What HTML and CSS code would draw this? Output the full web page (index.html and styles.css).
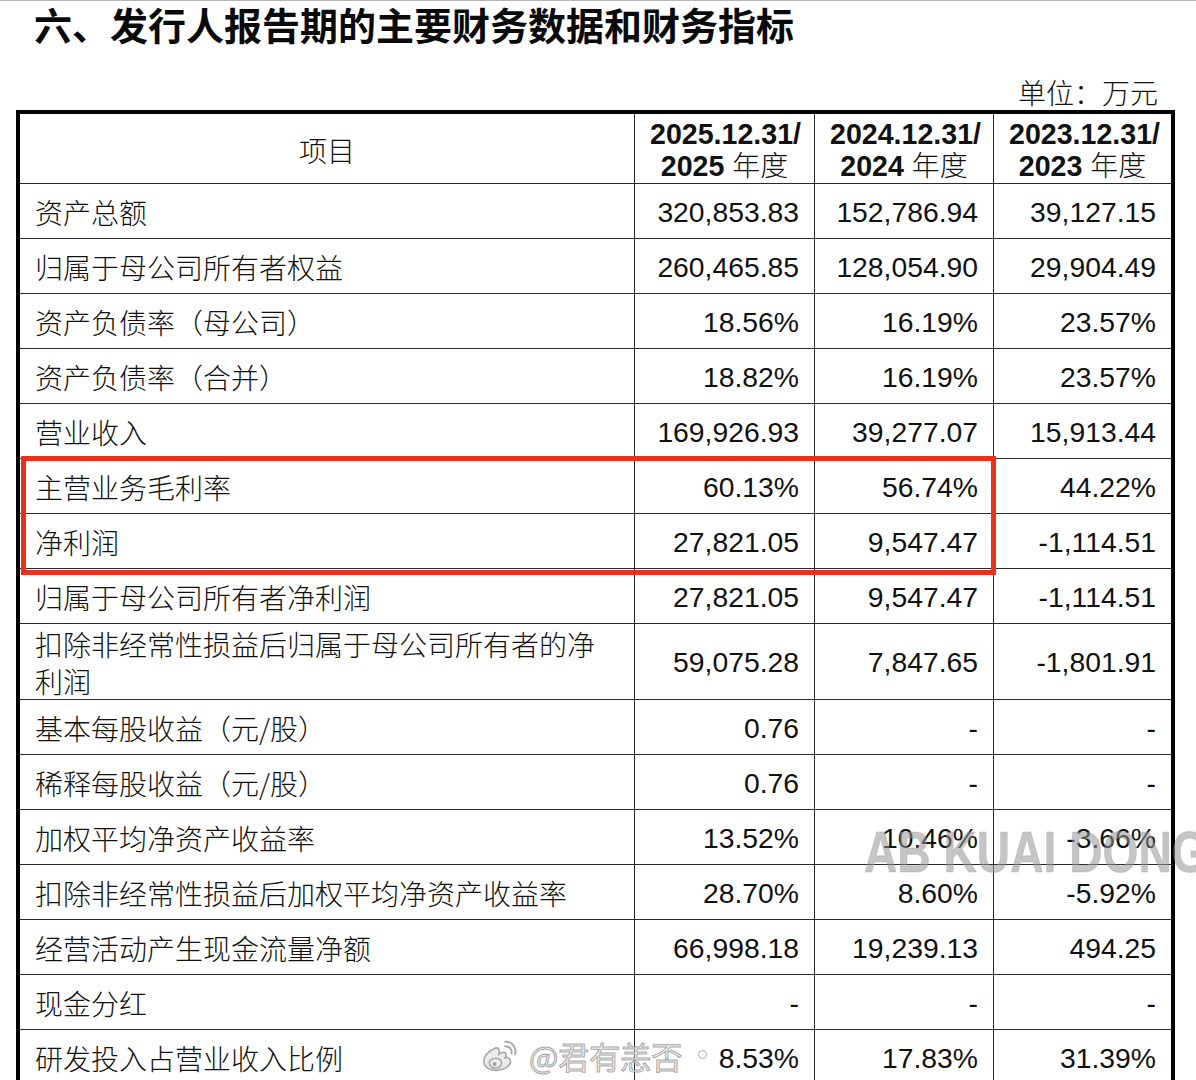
FILE: index.html
```html
<!DOCTYPE html>
<html lang="zh-CN">
<head>
<meta charset="utf-8">
<title>发行人报告期的主要财务数据和财务指标</title>
<link rel="stylesheet" href="styles.css">
</head>
<body>
<div class="page">
  <h1 class="title">六、发行人报告期的主要财务数据和财务指标</h1>
  <div class="unit">单位：万元</div>
  <table class="fin">
    <colgroup>
      <col class="c-item"><col class="c-y1"><col class="c-y2"><col class="c-y3">
    </colgroup>
    <thead>
      <tr>
        <th class="h-item">项目</th>
        <th class="h-year"><div class="yl"><b>2025.12.31/</b></div><div class="yl"><b>2025</b> 年度</div></th>
        <th class="h-year"><div class="yl"><b>2024.12.31/</b></div><div class="yl"><b>2024</b> 年度</div></th>
        <th class="h-year"><div class="yl"><b>2023.12.31/</b></div><div class="yl"><b>2023</b> 年度</div></th>
      </tr>
    </thead>
    <tbody>
      <tr><td class="lbl">资产总额</td><td>320,853.83</td><td>152,786.94</td><td>39,127.15</td></tr>
      <tr><td class="lbl">归属于母公司所有者权益</td><td>260,465.85</td><td>128,054.90</td><td>29,904.49</td></tr>
      <tr><td class="lbl">资产负债率（母公司）</td><td>18.56%</td><td>16.19%</td><td>23.57%</td></tr>
      <tr><td class="lbl">资产负债率（合并）</td><td>18.82%</td><td>16.19%</td><td>23.57%</td></tr>
      <tr><td class="lbl">营业收入</td><td>169,926.93</td><td>39,277.07</td><td>15,913.44</td></tr>
      <tr><td class="lbl">主营业务毛利率</td><td>60.13%</td><td>56.74%</td><td>44.22%</td></tr>
      <tr><td class="lbl">净利润</td><td>27,821.05</td><td>9,547.47</td><td>-1,114.51</td></tr>
      <tr><td class="lbl">归属于母公司所有者净利润</td><td>27,821.05</td><td>9,547.47</td><td>-1,114.51</td></tr>
      <tr class="tall"><td class="lbl">扣除非经常性损益后归属于母公司所有者的净利润</td><td>59,075.28</td><td>7,847.65</td><td>-1,801.91</td></tr>
      <tr><td class="lbl">基本每股收益（元/股）</td><td>0.76</td><td>-</td><td>-</td></tr>
      <tr><td class="lbl">稀释每股收益（元/股）</td><td>0.76</td><td>-</td><td>-</td></tr>
      <tr><td class="lbl">加权平均净资产收益率</td><td>13.52%</td><td>10.46%</td><td>-3.66%</td></tr>
      <tr><td class="lbl">扣除非经常性损益后加权平均净资产收益率</td><td>28.70%</td><td>8.60%</td><td>-5.92%</td></tr>
      <tr><td class="lbl">经营活动产生现金流量净额</td><td>66,998.18</td><td>19,239.13</td><td>494.25</td></tr>
      <tr><td class="lbl">现金分红</td><td>-</td><td>-</td><td>-</td></tr>
      <tr><td class="lbl">研发投入占营业收入比例</td><td>8.53%</td><td>17.83%</td><td>31.39%</td></tr>
    </tbody>
  </table>

  <div class="highlight"></div>
  <div class="wm-ab">AB KUAI DONG</div>
  <div class="wm-weibo">
    <svg class="wb-logo" width="36" height="32" viewBox="0 0 40 36">
      <path d="M16 9 C8 12 2 19 3 25 C4 32 12 35 19 34 C27 33 33 29 33 24 C33 20 29 19 27 20 C29 16 28 13 24 14 C22 14.5 20 16 20 16 C21 12 20 8 16 9 Z" fill="rgba(232,232,232,0.85)" stroke="rgba(140,140,140,0.75)" stroke-width="1.8"/>
      <ellipse cx="16" cy="26" rx="7" ry="5.5" fill="none" stroke="rgba(140,140,140,0.75)" stroke-width="1.6"/>
      <circle cx="15" cy="27" r="2.3" fill="rgba(140,140,140,0.75)"/>
      <path d="M27 7 C32 7 35 11 34 15" fill="none" stroke="rgba(140,140,140,0.75)" stroke-width="2.2" stroke-linecap="round"/>
      <path d="M27 2 C35 1 40 9 38 16" fill="none" stroke="rgba(140,140,140,0.75)" stroke-width="2.2" stroke-linecap="round"/>
    </svg>
    <span class="wb-text">@君有恙否</span>
    <span class="wb-dot"></span>
  </div>
</div>
</body>
</html>
```

FILE: styles.css
```css
html, body {
  margin: 0;
  padding: 0;
  background: #fff;
}
body {
  font-family: "Noto Sans CJK SC", "Liberation Sans", sans-serif;
  color: #111;
}
.page {
  position: relative;
  width: 1196px;
  height: 1080px;
  overflow: hidden;
  border-top: 1px solid #b5b5b5;
  box-sizing: border-box;
}
.title {
  margin: 0;
  padding-left: 34px;
  font-family: "Noto Sans CJK SC", sans-serif;
  font-weight: 700;
  font-size: 38px;
  line-height: 46px;
  height: 46px;
  color: #0a0a0a;
}
.unit {
  margin-top: 27px;
  padding-right: 38px;
  text-align: right;
  font-family: "Noto Sans CJK SC", sans-serif;
  font-weight: 300;
  font-size: 28px;
  line-height: 36px;
  height: 36px;
}
.fin {
  margin-left: 16px;
  border-collapse: separate;
  border-spacing: 0;
  border: 4px solid #000;
  table-layout: fixed;
  width: 1159px;
}
.c-item { width: 615px; }
.c-y1 { width: 180px; }
.c-y2 { width: 179px; }
.c-y3 { width: 177px; }
.fin th, .fin td {
  border-right: 1px solid #2a2a2a;
  border-bottom: 1px solid #2a2a2a;
  padding: 0 15px;
  vertical-align: middle;
  white-space: nowrap;
}
.fin th:last-child, .fin td:last-child { border-right: 0; }
.fin tbody tr:last-child td { border-bottom: 0; }
.fin th {
  font-family: "Liberation Sans", "Noto Sans CJK SC", sans-serif;
  font-weight: 300;
  font-size: 28px;
  line-height: 32px;
  padding: 4px 15px 1px;
  text-align: center;
}
.fin th .yl {
  height: 32px;
  line-height: 32px;
  overflow: visible;
}
.fin th b {
  font-weight: 700;
  font-size: 28.6px;
}
.fin th.h-item {
  font-family: "Noto Sans CJK SC", sans-serif;
  height: 64px;
  line-height: 64px;
}
.fin td {
  font-family: "Liberation Sans", "Noto Sans CJK SC", sans-serif;
  font-size: 28.3px;
  line-height: 52px;
  padding-top: 2px;
  text-align: right;
}
.fin td.lbl {
  font-family: "Noto Sans CJK SC", "Liberation Sans", sans-serif;
  font-weight: 300;
  font-size: 28px;
  text-align: left;
}
.fin tr.tall td {
  line-height: 73px;
}
.fin tr.tall td.lbl {
  white-space: normal;
  line-height: 36.5px;
}
.highlight {
  position: absolute;
  left: 21px;
  top: 455px;
  width: 975px;
  height: 119px;
  box-sizing: border-box;
  border: 5px solid #e8321c;
  pointer-events: none;
}
.wm-ab {
  position: absolute;
  left: 864px;
  top: 818px;
  font-family: "Liberation Sans", sans-serif;
  font-weight: 700;
  font-size: 57px;
  line-height: 66px;
  white-space: nowrap;
  color: rgba(150, 150, 150, 0.55);
  -webkit-text-stroke: 1px rgba(150, 150, 150, 0.3);
  transform: scaleX(0.81);
  transform-origin: left center;
}
.wm-weibo {
  position: absolute;
  left: 481px;
  top: 1036px;
  display: flex;
  align-items: center;
  gap: 12px;
}
.wb-text {
  font-family: "Noto Sans CJK SC", sans-serif;
  font-size: 31px;
  line-height: 38px;
  color: rgba(235, 235, 235, 0.75);
  -webkit-text-stroke: 1px rgba(130, 130, 130, 0.7);
}
.wb-dot {
  width: 7px;
  height: 7px;
  border: 1.5px solid rgba(140, 140, 140, 0.7);
  border-radius: 50%;
  margin-left: 4px;
  margin-bottom: 4px;
}
```
